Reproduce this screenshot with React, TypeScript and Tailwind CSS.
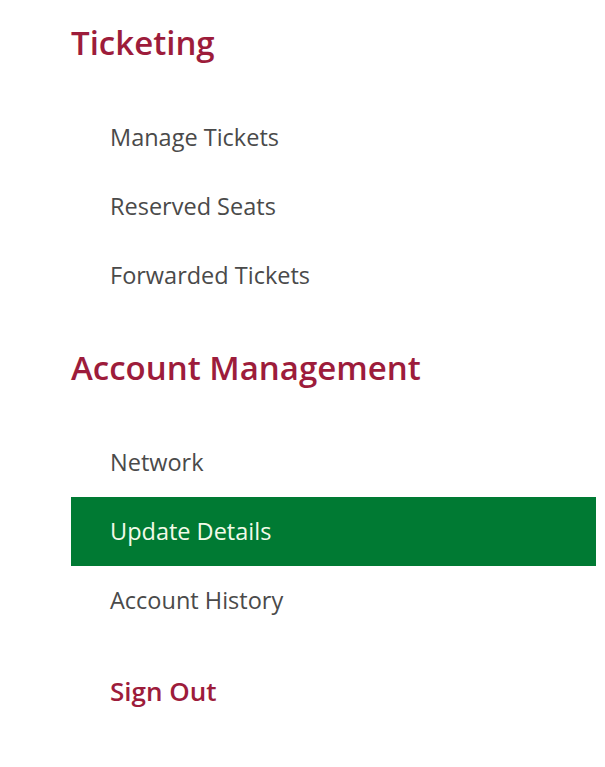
const ticketing = ["Manage Tickets", "Reserved Seats", "Forwarded Tickets"];
const account = ["Network", "Update Details", "Account History"];

function NavItem({ label, active }: { label: string; active?: boolean }) {
  return (
    <li
      className={`flex h-[69px] items-center pl-[39px] text-[23.5px] ${
        active ? "bg-[#007a33] text-[#f2fbe9]" : "text-[#4a4a4a]"
      }`}
    >
      {label}
    </li>
  );
}

export default function App() {
  return (
    <div className="min-h-[767px] bg-white pl-[71px] pr-[9px] pt-[23px] font-['Open_Sans',sans-serif]">
      <h2 className="text-[33px] leading-[40px] font-semibold text-[#9d1c3b]">Ticketing</h2>
      <ul className="mt-[40px]">
        {ticketing.map((t) => (
          <NavItem key={t} label={t} />
        ))}
      </ul>
      <h2 className="mt-[38px] text-[33px] leading-[40px] font-semibold text-[#9d1c3b]">
        Account Management
      </h2>
      <ul className="mt-[40px]">
        {account.map((t) => (
          <NavItem key={t} label={t} active={t === "Update Details"} />
        ))}
      </ul>
      <a className="mt-[36px] block pl-[39px] text-[26px] leading-[40px] font-semibold text-[#9d1c3b]">
        Sign Out
      </a>
    </div>
  );
}
